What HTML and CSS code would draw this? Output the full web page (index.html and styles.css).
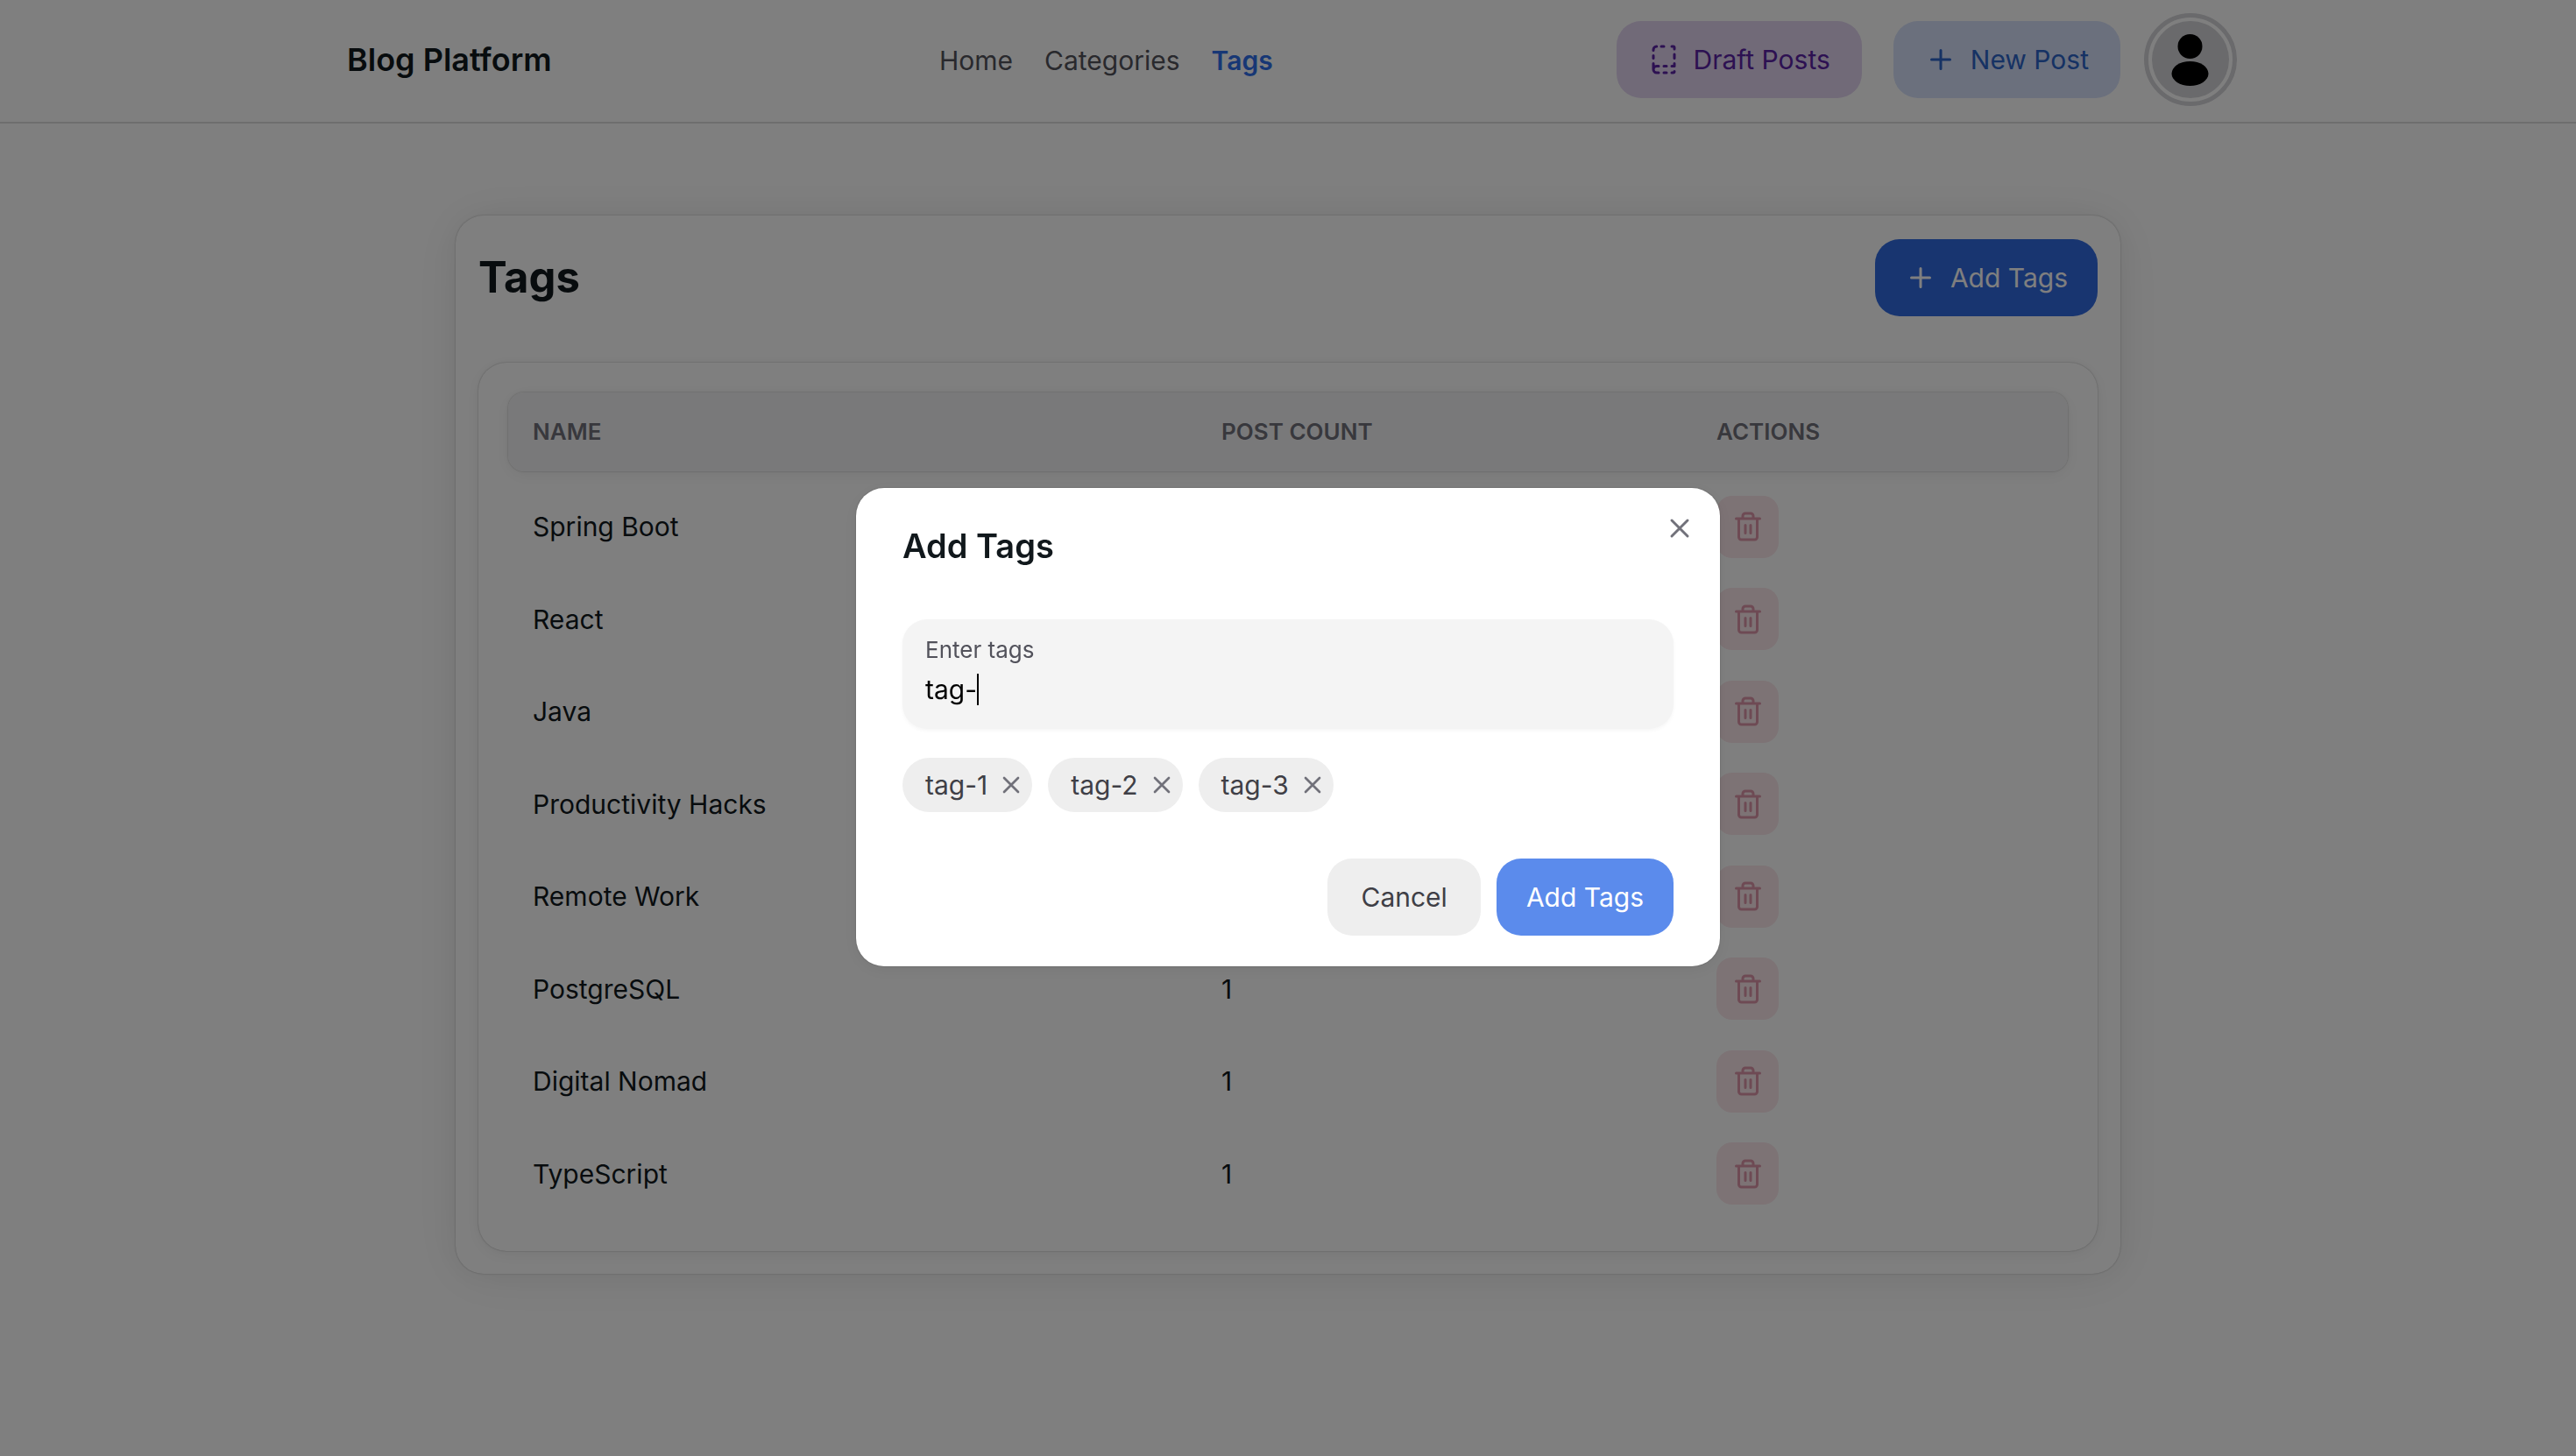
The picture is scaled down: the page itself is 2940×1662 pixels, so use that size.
FILE: index.html
```html
<!DOCTYPE html>
<html lang="en">
<head>
<meta charset="utf-8">
<title>Blog Platform</title>
<link rel="stylesheet" href="styles.css">
</head>
<body>
<svg class="sprite" aria-hidden="true">
  <symbol id="trash" viewBox="0 0 24 24" fill="none" stroke="currentColor" stroke-width="2" stroke-linecap="round" stroke-linejoin="round"><path d="M3 6h18M19 6v14a2 2 0 0 1-2 2H7a2 2 0 0 1-2-2V6M8 6V4a2 2 0 0 1 2-2h4a2 2 0 0 1 2 2v2M10 11v6M14 11v6"/></symbol>
  <symbol id="plus" viewBox="0 0 24 24" fill="none" stroke="currentColor" stroke-width="2" stroke-linecap="round"><path d="M5 12h14M12 5v14"/></symbol>
  <symbol id="cross" viewBox="0 0 24 24" fill="none" stroke="currentColor" stroke-width="2" stroke-linecap="round"><path d="M18 6 6 18M6 6l12 12"/></symbol>
  <symbol id="draft" viewBox="0 0 24 24" fill="none" stroke="currentColor" stroke-width="2" stroke-linecap="round" stroke-linejoin="round"><path d="M12 17h2M12 22h2M12 2h-2M18 22h1a1 1 0 0 0 1-1M18 2h1a1 1 0 0 1 1 1v1M20 15v2h-2M20 8v3M4 11V9M4 19.500V15M4 5v-.5A2.500 2.500 0 0 1 6.500 2M8 22H6.500a1 1 0 0 1 0-5H8"/></symbol>
</svg>
<header class="navbar">
  <div class="navbar-inner">
    <a class="brand" href="#">Blog Platform</a>
    <nav class="links">
      <a href="#">Home</a>
      <a href="#">Categories</a>
      <a class="current" href="#">Tags</a>
    </nav>
    <div class="account">
      <button class="btn btn-draft"><svg class="icon"><use href="#draft"/></svg>Draft Posts</button>
      <button class="btn btn-new"><svg class="icon"><use href="#plus"/></svg>New Post</button>
      <button class="avatar" aria-label="Account"><svg viewBox="0 0 88 88"><circle cx="43.500" cy="29" r="14"/><ellipse cx="43.500" cy="60" rx="21" ry="14"/></svg></button>
    </div>
  </div>
</header>
<main class="card">
  <div class="card-head">
    <h1>Tags</h1>
    <button class="btn btn-primary"><svg class="icon"><use href="#plus"/></svg>Add Tags</button>
  </div>
  <div class="table-wrap">
    <table>
      <colgroup><col class="col-name"><col class="col-count"><col class="col-actions"></colgroup>
      <thead><tr><th>NAME</th><th>POST COUNT</th><th>ACTIONS</th></tr></thead>
      <tbody>
        <tr><td>Spring Boot</td><td></td><td><button class="delete" aria-label="Delete"><svg><use href="#trash"/></svg></button></td></tr>
        <tr><td>React</td><td></td><td><button class="delete" aria-label="Delete"><svg><use href="#trash"/></svg></button></td></tr>
        <tr><td>Java</td><td></td><td><button class="delete" aria-label="Delete"><svg><use href="#trash"/></svg></button></td></tr>
        <tr><td>Productivity Hacks</td><td></td><td><button class="delete" aria-label="Delete"><svg><use href="#trash"/></svg></button></td></tr>
        <tr><td>Remote Work</td><td></td><td><button class="delete" aria-label="Delete"><svg><use href="#trash"/></svg></button></td></tr>
        <tr><td>PostgreSQL</td><td>1</td><td><button class="delete" aria-label="Delete"><svg><use href="#trash"/></svg></button></td></tr>
        <tr><td>Digital Nomad</td><td>1</td><td><button class="delete" aria-label="Delete"><svg><use href="#trash"/></svg></button></td></tr>
        <tr><td>TypeScript</td><td>1</td><td><button class="delete" aria-label="Delete"><svg><use href="#trash"/></svg></button></td></tr>
      </tbody>
    </table>
  </div>
</main>
<div class="backdrop">
  <section class="modal" role="dialog" aria-labelledby="modal-title">
    <button class="close" aria-label="Close"><svg><use href="#cross"/></svg></button>
    <h2 id="modal-title">Add Tags</h2>
    <div class="field">
      <label for="tag-input">Enter tags</label>
      <div class="entry"><input id="tag-input" type="text" value="tag-" autocomplete="off"><span class="caret"></span></div>
    </div>
    <div class="chips">
      <span class="chip">tag-1<button aria-label="Remove tag-1"><svg><use href="#cross"/></svg></button></span>
      <span class="chip">tag-2<button aria-label="Remove tag-2"><svg><use href="#cross"/></svg></button></span>
      <span class="chip">tag-3<button aria-label="Remove tag-3"><svg><use href="#cross"/></svg></button></span>
    </div>
    <div class="modal-foot">
      <button class="btn btn-cancel">Cancel</button>
      <button class="btn btn-submit">Add Tags</button>
    </div>
  </section>
</div>
</body>
</html>
```
FILE: styles.css
```css
* { box-sizing: border-box; }

body {
  margin: 0;
  min-height: 100vh;
  font-family: Inter, sans-serif;
  font-size: 30px;
  line-height: 48px;
  color: #11181c;
  background: #fff;
}

button, input { font: inherit; color: inherit; border: 0; padding: 0; background: none; }
a { color: inherit; text-decoration: none; }
h1, h2 { margin: 0; }
svg { display: block; }
.sprite { position: absolute; width: 0; height: 0; }

/* Top bar */
.navbar { border-bottom: 2px solid #dcdcdc; }
.navbar-inner {
  display: grid;
  grid-template-columns: 676px auto 1fr;
  align-items: center;
  max-width: 2160px;
  margin: 0 auto;
  padding: 24px 6px 27px;
}
.brand { font-size: 36px; font-weight: 600; }
.links { display: flex; gap: 36px; padding-top: 2px; color: #52525b; }
.links .current { color: #2f6feb; font-weight: 600; }
.account { display: flex; justify-content: flex-end; align-items: center; gap: 36px; }

.btn {
  display: flex;
  align-items: center;
  justify-content: center;
  gap: 16px;
  height: 88px;
  padding: 0 34px;
  border-radius: 28px;
  white-space: nowrap;
}
.icon { width: 36px; height: 36px; }
.btn-draft, .btn-new { padding: 0 36px; }
.btn-draft { background: #e2d4f0; color: #5a22a4; }
.btn-new { background: #d6e0fa; color: #2c64c8; }
.btn-primary { background: #306ae0; color: #fff; }
.avatar {
  width: 88px;
  height: 88px;
  border-radius: 50%;
  background: #d4d4d8;
  outline: 5px solid #d4d4d8;
  outline-offset: 4px;
}

/* Tags card */
.card {
  width: 1900px;
  max-width: 100%;
  margin: 105px auto 0;
  padding: 27px 26px 26px;
  border-radius: 32px;
  box-shadow: 0 0 30px rgba(0, 0, 0, .03), 0 4px 60px rgba(0, 0, 0, .08), 0 0 2px rgba(0, 0, 0, .3);
}
.card-head { display: flex; align-items: center; justify-content: space-between; }
.card-head h1 { font-size: 49px; line-height: 64px; font-weight: 700; }
.table-wrap {
  margin-top: 53px;
  padding: 34px 34px 36px;
  border-radius: 32px;
  box-shadow: 0 0 10px rgba(0, 0, 0, .02), 0 4px 20px rgba(0, 0, 0, .06), 0 0 2px rgba(0, 0, 0, .3);
}
table { width: 100%; table-layout: fixed; border-collapse: separate; border-spacing: 0; }
.col-name { width: 786px; }
.col-count { width: 565px; }
th {
  height: 90px;
  padding: 0 28px;
  background: #f3f3f4;
  color: #71717a;
  font-size: 26px;
  font-weight: 600;
  text-align: left;
}
th:first-child { border-radius: 18px 0 0 18px; }
th:last-child { border-radius: 0 18px 18px 0; }
thead tr {
  border-radius: 18px;
  box-shadow: 0 0 10px rgba(0, 0, 0, .02), 0 4px 20px rgba(0, 0, 0, .06), 0 0 2px rgba(0, 0, 0, .3);
}
tbody::before { content: ""; display: block; height: 10px; }
td { height: 106px; padding: 0 28px; }
tr:nth-child(even) td { height: 105px; }
.delete {
  display: grid;
  place-items: center;
  width: 71px;
  height: 71px;
  border-radius: 18px;
  background: #fae6ea;
  color: #dc95a8;
}
.delete svg { width: 36px; height: 36px; }

/* Dialog */
.backdrop {
  position: fixed;
  inset: 0;
  display: grid;
  place-items: center;
  background: rgba(0, 0, 0, .5);
}
.modal {
  position: relative;
  width: 986px;
  margin-bottom: 2px;
  padding: 42px 53px 35px;
  border-radius: 32px;
  background: #fff;
  box-shadow: 0 0 10px rgba(0, 0, 0, .02), 0 4px 20px rgba(0, 0, 0, .06), 0 0 2px rgba(0, 0, 0, .3);
}
.modal h2 { font-size: 38px; line-height: 48px; font-weight: 600; }
.close { position: absolute; top: 28px; right: 28px; color: #71717a; }
.close svg { width: 36px; height: 36px; }
.field {
  height: 125px;
  margin-top: 60px;
  padding: 17px 26px;
  border-radius: 28px;
  background: #f4f4f4;
  box-shadow: 0 2px 4px rgba(0, 0, 0, .04);
}
.field label { display: block; font-size: 26px; line-height: 36px; color: #52525b; }
.entry { display: flex; align-items: center; height: 54px; }
.entry input { field-sizing: content; outline: 0; color: #000; }
.caret { width: 2px; height: 36px; background: #000; }
.chips { display: flex; gap: 18px; margin-top: 33px; }
.chip {
  display: flex;
  align-items: center;
  gap: 11px;
  height: 62px;
  padding: 0 8px 0 26px;
  border-radius: 31px;
  background: #eee;
  color: #3f3f46;
}
.chip svg { width: 32px; height: 32px; color: #71717a; }
.modal-foot { display: flex; justify-content: flex-end; gap: 18px; margin-top: 53px; }
.btn-cancel { background: #eee; color: #3f3f46; padding: 0 38px; }
.btn-submit { background: #5b8bec; color: #fff; }
```
